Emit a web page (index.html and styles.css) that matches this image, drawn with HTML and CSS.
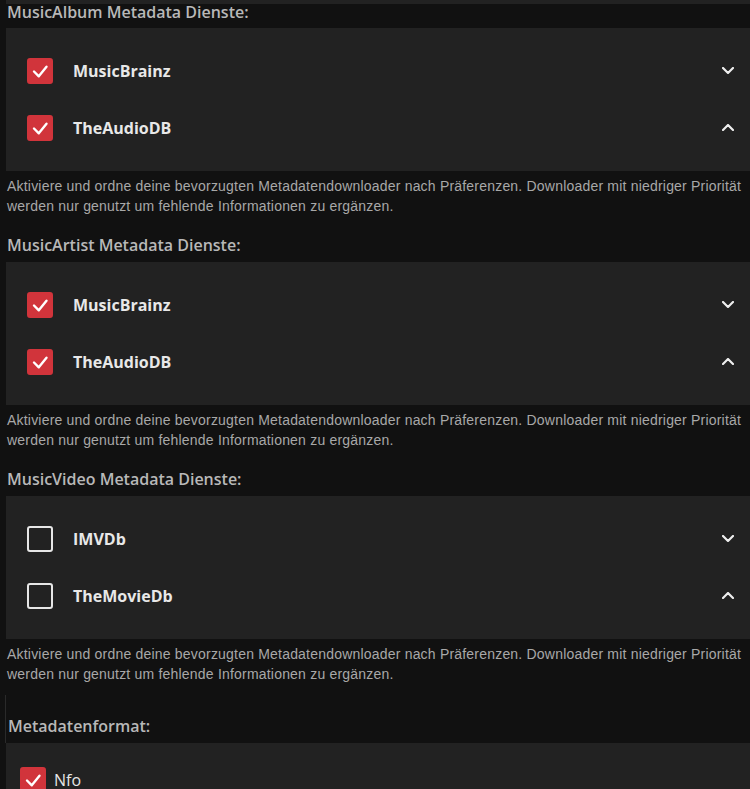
FILE: index.html
```html
<!DOCTYPE html>
<html lang="de">
<head>
  <meta charset="UTF-8" />
  <meta name="viewport" content="width=device-width, initial-scale=1.0" />
  <title>Metadaten</title>
  <link rel="stylesheet" href="styles.css">
</head>
<body>
  <div class="page">
    <div class="strip"></div>

    <div class="section section-first">
      <h3 class="section-title">MusicAlbum Metadata Dienste:</h3>
      <div class="panel">
        <div class="row">
          <span class="check checked"><svg viewBox="0 0 26 26"><polyline points="7,13.5 11.8,18.3 19.5,8.8" /></svg></span>
          <span class="row-label">MusicBrainz</span>
          <svg class="chevron" viewBox="0 0 12 7"><polyline points="1,1 6,6 11,1" /></svg>
        </div>
        <div class="row">
          <span class="check checked"><svg viewBox="0 0 26 26"><polyline points="7,13.5 11.8,18.3 19.5,8.8" /></svg></span>
          <span class="row-label">TheAudioDB</span>
          <svg class="chevron" viewBox="0 0 12 7"><polyline points="1,6 6,1 11,6" /></svg>
        </div>
      </div>
      <p class="desc">Aktiviere und ordne deine bevorzugten Metadatendownloader nach Präferenzen. Downloader mit niedriger Priorität werden nur genutzt um fehlende Informationen zu ergänzen.</p>
    </div>

    <div class="section">
      <h3 class="section-title">MusicArtist Metadata Dienste:</h3>
      <div class="panel">
        <div class="row">
          <span class="check checked"><svg viewBox="0 0 26 26"><polyline points="7,13.5 11.8,18.3 19.5,8.8" /></svg></span>
          <span class="row-label">MusicBrainz</span>
          <svg class="chevron" viewBox="0 0 12 7"><polyline points="1,1 6,6 11,1" /></svg>
        </div>
        <div class="row">
          <span class="check checked"><svg viewBox="0 0 26 26"><polyline points="7,13.5 11.8,18.3 19.5,8.8" /></svg></span>
          <span class="row-label">TheAudioDB</span>
          <svg class="chevron" viewBox="0 0 12 7"><polyline points="1,6 6,1 11,6" /></svg>
        </div>
      </div>
      <p class="desc">Aktiviere und ordne deine bevorzugten Metadatendownloader nach Präferenzen. Downloader mit niedriger Priorität werden nur genutzt um fehlende Informationen zu ergänzen.</p>
    </div>

    <div class="section">
      <h3 class="section-title">MusicVideo Metadata Dienste:</h3>
      <div class="panel">
        <div class="row">
          <span class="check"></span>
          <span class="row-label">IMVDb</span>
          <svg class="chevron" viewBox="0 0 12 7"><polyline points="1,1 6,6 11,1" /></svg>
        </div>
        <div class="row">
          <span class="check"></span>
          <span class="row-label">TheMovieDb</span>
          <svg class="chevron" viewBox="0 0 12 7"><polyline points="1,6 6,1 11,6" /></svg>
        </div>
      </div>
      <p class="desc">Aktiviere und ordne deine bevorzugten Metadatendownloader nach Präferenzen. Downloader mit niedriger Priorität werden nur genutzt um fehlende Informationen zu ergänzen.</p>
    </div>

    <div class="format">
      <div class="format-head">
        <h3 class="section-title">Metadatenformat:</h3>
      </div>
      <div class="format-panel">
        <label class="format-row">
          <span class="check checked"><svg viewBox="0 0 26 26"><polyline points="7,13.5 11.8,18.3 19.5,8.8" /></svg></span>
          <span class="format-label">Nfo</span>
        </label>
      </div>
    </div>
  </div>
</body>
</html>
```

FILE: styles.css
```css
html, body { margin: 0; padding: 0; background: #111; overflow: hidden; }
body { font-family: "Open Sans", "Noto Sans", sans-serif; color: #e6e6e6; }
.page { padding-left: 6px; }

.strip { height: 4px; background: #222; }

.section-title { margin: 0 0 7px; padding-left: 1px; font-size: 16px; line-height: 20px; font-weight: 600; color: #b8b8b8; }
.section { padding-top: 19px; }
.section-first { padding-top: 0; }
.section-first .section-title { margin-top: -2px; margin-bottom: 6px; }

.panel { background: #222; padding: 14px 16px 15px 21px; }
.row { display: flex; align-items: center; height: 57px; }
.row-label { flex: 1; margin-left: 20px; font-size: 16px; font-weight: 700; color: #e8e8e8; }

.check { width: 26px; height: 26px; box-sizing: border-box; border: 2px solid #e6e6e6; border-radius: 3px; flex: none; display: flex; }
.check.checked { background: #d1343b; border-color: #d1343b; }
.check svg { width: 26px; height: 26px; margin: -2px; }
.check polyline { fill: none; stroke: #fff; stroke-width: 2.4; stroke-linecap: round; stroke-linejoin: round; }

.chevron { width: 12px; height: 7px; }
.chevron polyline { fill: none; stroke: #eee; stroke-width: 2.2; stroke-linecap: round; stroke-linejoin: round; }

.desc { margin: 5px 0 0; padding-left: 1px; padding-right: 2px; font-family: "Liberation Sans", Arial, sans-serif; font-size: 14px; letter-spacing: 0.2px; line-height: 20px; color: #a8a8a8; }

.format { padding-top: 11px; }
.format-head { margin-left: -1px; border-left: 1px solid #2a2a2a; padding: 21px 0 0 1px; }
.format-head .section-title { margin-bottom: 0; padding-bottom: 7px; }
.format-panel { background: #222; padding: 24px 14px 20px; }
.format-row { display: flex; align-items: center; }
.format-label { margin-left: 8px; font-size: 16px; color: #e6e6e6; }
```
